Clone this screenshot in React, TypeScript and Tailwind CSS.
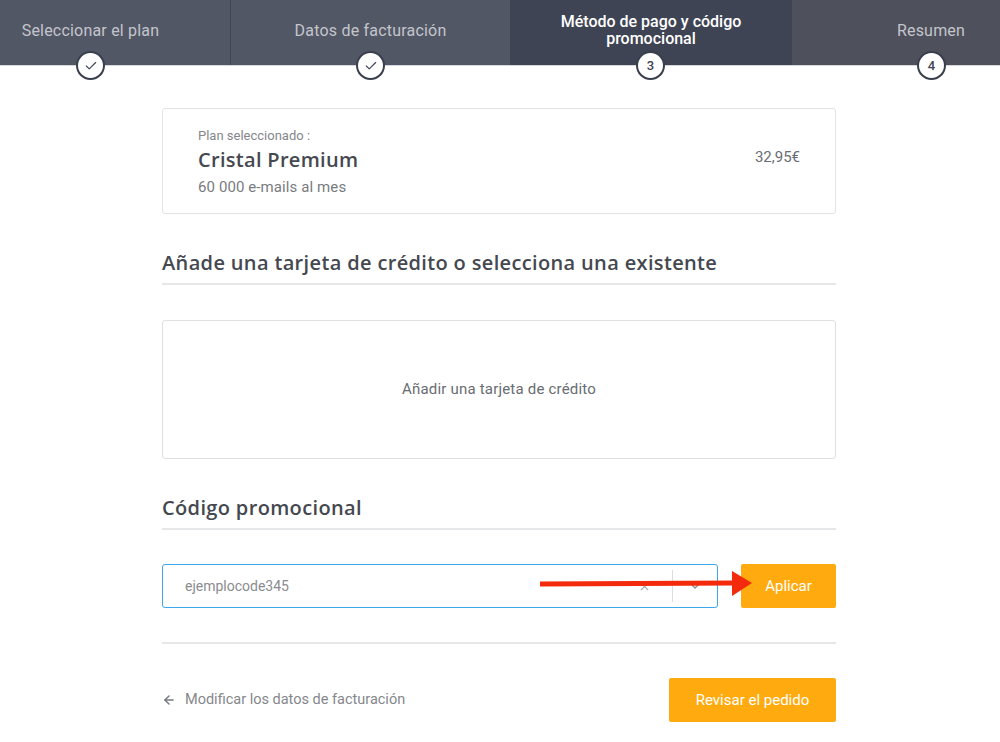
import { Check, ArrowLeft, X, ChevronDown } from "lucide-react";

const steps = [
  { label: "Seleccionar el plan", mark: "check", tone: "bg-[#525766]" },
  { label: "Datos de facturación", mark: "check", tone: "bg-[#525766]" },
  { label: "Método de pago y código promocional", mark: "3", tone: "bg-[#3f4454]" },
  { label: "Resumen", mark: "4", tone: "bg-[#4e505c]" },
];

const Stepper = () => (
  <div className="h-[66px] overflow-hidden border-b border-[#d5d7dc] pb-0">
    <div className="ml-[-49px] flex w-[1120px]">
      {steps.map((step, index) => {
        const active = index === 2;
        return (
          <div
            key={step.label}
            className={`flex h-[65px] shrink-0 justify-center pt-[13px] text-center ${step.tone} ${
              index === 0 ? "w-[280px] border-r border-[#3f4454]" : index === 1 ? "w-[279px]" : index === 2 ? "w-[282px]" : "w-[278px]"
            }`}
          >
            {active ? (
              <span className="w-[220px] text-[16px] leading-[17px] font-medium text-white">{step.label}</span>
            ) : (
              <span className="pt-[6px] text-[16px] leading-[24px] tracking-[0.2px] text-[#c3c5cb]">{step.label}</span>
            )}
          </div>
        );
      })}
    </div>
  </div>
);

const StepMark = ({ mark, x }: { mark: string; x: string }) => (
  <div
    className={`absolute top-[51px] flex h-[29px] w-[29px] items-center justify-center rounded-full border-2 border-[#3a3f4e] bg-white text-[13px] font-medium text-[#3f4454] ${x}`}
  >
    {mark === "check" ? <Check size={14} strokeWidth={2} /> : mark}
  </div>
);

const SectionTitle = ({ children }: { children: string }) => (
  <div className="border-b-2 border-[#e6e7e9] pb-[5px] font-['Open_Sans','Noto_Sans',sans-serif] text-[20px] leading-[30px] font-semibold tracking-[0.35px] text-[#45484f]">
    {children}
  </div>
);

export default function App() {
  return (
    <div className="relative h-[742px] w-[1000px] overflow-hidden bg-white font-['Roboto',sans-serif]">
      <Stepper />
      <StepMark mark="check" x="left-[76px]" />
      <StepMark mark="check" x="left-[356px]" />
      <StepMark mark="3" x="left-[636px]" />
      <StepMark mark="4" x="left-[917px]" />

      <div className="mx-auto mt-[42px] w-[674px] translate-x-[-1px]">
        <div className="flex h-[106px] items-start justify-between rounded-[3px] border border-[#e2e3e5] px-[35px] pt-[18px]">
          <div>
            <div className="text-[13px] leading-[17px] text-[#85878c]">Plan seleccionado :</div>
            <div className="mt-[2px] font-['Open_Sans','Noto_Sans',sans-serif] text-[20px] leading-[28px] font-semibold tracking-[0.3px] text-[#45484f]">
              Cristal Premium
            </div>
            <div className="mt-[3px] text-[15px] leading-[20px] tracking-[0.1px] text-[#797b80]">60 000 e-mails al mes</div>
          </div>
          <div className="pt-[20px] text-[15px] leading-[20px] text-[#6a6d73]">32,95€</div>
        </div>

        <div className="mt-[34px]">
          <SectionTitle>Añade una tarjeta de crédito o selecciona una existente</SectionTitle>
        </div>

        <div className="mt-[35px] flex h-[139px] items-center justify-center rounded-[3px] border border-[#dfe0e2] text-[15px] tracking-[0.2px] text-[#696c72]">
          Añadir una tarjeta de crédito
        </div>

        <div className="mt-[34px]">
          <SectionTitle>Código promocional</SectionTitle>
        </div>

        <div className="mt-[34px] flex justify-between">
          <div className="flex h-[44px] w-[556px] items-center rounded-[3px] border border-[#3ea6ec] pl-[22px] text-[14px] text-[#8a8c90]">
            <span className="flex-1">ejemplocode345</span>
            <X size={13} className="mr-[21px] text-[#a9abae]" />
            <div className="h-[32px] w-px bg-[#dcdde0]" />
            <ChevronDown size={16} className="mx-[14px] text-[#8a8c90]" />
          </div>
          <button className="h-[44px] w-[95px] rounded-[2px] bg-[#ffab0f] text-[15px] text-white">Aplicar</button>
        </div>

        <div className="mt-[34px] border-t-2 border-[#e6e7e9]" />

        <div className="mt-[34px] flex items-center justify-between">
          <div className="flex items-center gap-[9px] text-[14.5px] text-[#85878c]">
            <ArrowLeft size={14} strokeWidth={2.5} className="text-[#77797e]" />
            Modificar los datos de facturación
          </div>
          <button className="h-[44px] w-[167px] rounded-[2px] bg-[#ffab0f] text-[15px] text-white">Revisar el pedido</button>
        </div>
      </div>

      <svg className="absolute top-[568px] left-[538px]" width="216" height="30" viewBox="0 0 216 30">
        <path d="M2 13.5 L196 12.5 L196 17.5 L2 18.5 Z" fill="#f42a0c" />
        <path d="M194 3 L214 15 L194 28 Z" fill="#f42a0c" />
      </svg>
    </div>
  );
}
